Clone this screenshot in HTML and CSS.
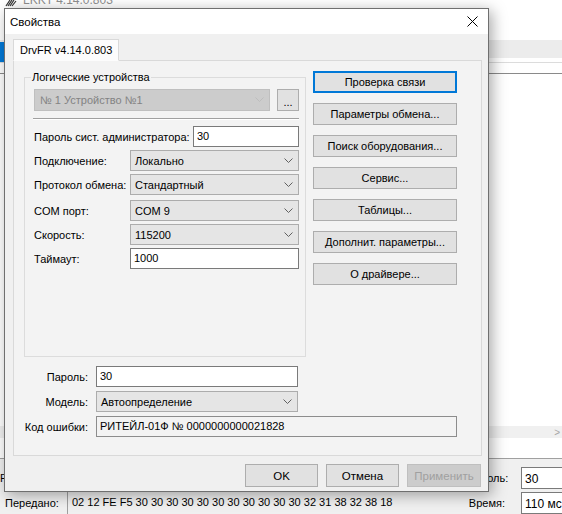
FILE: index.html
```html
<!DOCTYPE html>
<html lang="ru">
<head>
  <meta charset="UTF-8" />
  <title>Свойства</title>
  <link rel="stylesheet" href="styles.css">
</head>
<body>
  <!-- окно программы на заднем плане -->
  <div class="app">
    <div class="app-title">
      <svg class="app-icon" width="12" height="8" viewBox="0 0 12 8">
        <path d="M1 7 L5 1 M3 7 L7 1 M5 7 L9 1 M7 7 L11 2" stroke="#333" stroke-width="1.2" fill="none"/>
      </svg>
      <span>LKKT 4.14.0.803</span>
    </div>
    <div class="app-menu"></div>
    <div class="app-toolbar"></div>
    <div class="app-rule"></div>
    <div class="app-list"></div>
    <div class="app-scroll"><span class="scroll-arrow">&gt;</span></div>
    <div class="app-gap"></div>
    <div class="app-status">
      <div class="status-row">
        <span class="status-left">F</span>
        <span class="status-label">Пароль:</span>
        <span class="status-field">30</span>
      </div>
      <div class="status-row">
        <span class="sent-label">Передано:</span>
        <span class="sent-data">02 12 FE F5 30 30 30 30 30 30 30 30 30 30 30 32 31 38 32 38 18</span>
        <span class="status-label">Время:</span>
        <span class="status-field">110 мс</span>
      </div>
    </div>
    <div class="app-selected"></div>
  </div>

  <!-- диалог свойств -->
  <div class="dialog">
    <div class="dialog-title">
      <span>Свойства</span>
      <svg class="close" width="11" height="11" viewBox="0 0 11 11">
        <path d="M0.5 0.5 L10.5 10.5 M10.5 0.5 L0.5 10.5" stroke="#000" stroke-width="1" fill="none"/>
      </svg>
    </div>

    <div class="dialog-body">
      <div class="tabs">
        <div class="tab">DrvFR v4.14.0.803</div>
      </div>

      <div class="panel">
        <div class="panel-top">
          <div class="group">
            <span class="group-title">Логические устройства</span>
            <div class="device-row">
              <div class="combo combo-disabled device-combo">
                <span>№ 1 Устройство №1</span>
                <svg class="chevron" width="9" height="5" viewBox="0 0 9 5"><polyline points="0.5,0.5 4.5,4.5 8.5,0.5" fill="none" stroke="#bdbdbd"/></svg>
              </div>
              <div class="btn dots-btn">...</div>
            </div>
            <div class="separator"></div>

            <div class="field-row">
              <span>Пароль сист. администратора:</span>
              <div class="edit admin-pass">30</div>
            </div>
            <div class="field-row">
              <span class="field-label">Подключение:</span>
              <div class="combo wide">
                <span>Локально</span>
                <svg class="chevron" width="9" height="5" viewBox="0 0 9 5"><polyline points="0.5,0.5 4.5,4.5 8.5,0.5" fill="none" stroke="#606060"/></svg>
              </div>
            </div>
            <div class="field-row">
              <span class="field-label">Протокол обмена:</span>
              <div class="combo wide">
                <span>Стандартный</span>
                <svg class="chevron" width="9" height="5" viewBox="0 0 9 5"><polyline points="0.5,0.5 4.5,4.5 8.5,0.5" fill="none" stroke="#606060"/></svg>
              </div>
            </div>
            <div class="field-row spaced">
              <span class="field-label">COM порт:</span>
              <div class="combo wide">
                <span>COM 9</span>
                <svg class="chevron" width="9" height="5" viewBox="0 0 9 5"><polyline points="0.5,0.5 4.5,4.5 8.5,0.5" fill="none" stroke="#606060"/></svg>
              </div>
            </div>
            <div class="field-row">
              <span class="field-label">Скорость:</span>
              <div class="combo wide">
                <span>115200</span>
                <svg class="chevron" width="9" height="5" viewBox="0 0 9 5"><polyline points="0.5,0.5 4.5,4.5 8.5,0.5" fill="none" stroke="#606060"/></svg>
              </div>
            </div>
            <div class="field-row">
              <span class="field-label">Таймаут:</span>
              <div class="edit wide">1000</div>
            </div>
          </div>

          <div class="actions">
            <div class="btn btn-default">Проверка связи</div>
            <div class="btn">Параметры обмена...</div>
            <div class="btn">Поиск оборудования...</div>
            <div class="btn">Сервис...</div>
            <div class="btn">Таблицы...</div>
            <div class="btn">Дополнит. параметры...</div>
            <div class="btn">О драйвере...</div>
          </div>
        </div>

        <div class="panel-bottom">
          <div class="bottom-row">
            <span class="bottom-label">Пароль:</span>
            <div class="edit short">30</div>
          </div>
          <div class="bottom-row">
            <span class="bottom-label">Модель:</span>
            <div class="combo short">
              <span>Автоопределение</span>
              <svg class="chevron" width="9" height="5" viewBox="0 0 9 5"><polyline points="0.5,0.5 4.5,4.5 8.5,0.5" fill="none" stroke="#606060"/></svg>
            </div>
          </div>
          <div class="bottom-row">
            <span class="bottom-label">Код ошибки:</span>
            <div class="readonly">РИТЕЙЛ-01Ф № 0000000000021828</div>
          </div>
        </div>
      </div>

      <div class="dialog-buttons">
        <div class="btn footer-btn">OK</div>
        <div class="btn footer-btn">Отмена</div>
        <div class="btn footer-btn btn-disabled">Применить</div>
      </div>
    </div>
  </div>
</body>
</html>
```

FILE: styles.css
```css
* {
  box-sizing: border-box;
  margin: 0;
  padding: 0;
}

body {
  width: 562px;
  height: 514px;
  overflow: hidden;
  position: relative;
  background: #fff;
  color: #000;
  font-family: "Liberation Sans", Arial, sans-serif;
  font-size: 11px;
}

/* ---- окно на заднем плане ---- */
.app {
  position: absolute;
  left: 0;
  top: 0;
  width: 562px;
  height: 514px;
  display: flex;
  flex-direction: column;
}

.app-title {
  height: 8px;
  overflow: hidden;
  display: flex;
  align-items: flex-start;
  gap: 6px;
  padding-left: 5px;
  color: #8f8f8f;
  font-size: 12px;
}

.app-icon {
  flex-shrink: 0;
  margin-top: -1px;
}

.app-title span {
  line-height: 14px;
  margin-top: -7px;
}

.app-menu {
  height: 32px;
}

.app-toolbar {
  height: 18px;
  background: #ececec;
}

.app-rule {
  height: 12px;
  margin-top: 4px;
  border-top: 1px solid #dcdcdc;
  border-bottom: 1px solid #8a8a8a;
}

.app-list {
  height: 353px;
}

.app-scroll {
  height: 12px;
  background: #f0f0f0;
  display: flex;
  justify-content: flex-end;
  align-items: center;
  padding-right: 2px;
}

.scroll-arrow {
  color: #a6a6a6;
  font-size: 10px;
}

.app-gap {
  height: 21px;
  border-bottom: 1px solid #a0a0a0;
}

.app-status {
  flex: 1;
  background: #f0f0f0;
  padding-top: 8px;
  display: flex;
  flex-direction: column;
  gap: 3px;
}

.status-row {
  display: flex;
  align-items: center;
  height: 22px;
}

.status-left {
  flex-shrink: 0;
  width: 467px;
}

.status-label {
  flex-shrink: 0;
  width: 38px;
  text-align: right;
  white-space: nowrap;
}

.status-field {
  flex-shrink: 0;
  margin-left: 16px;
  width: 60px;
  height: 22px;
  background: #fff;
  border: 1px solid #7a7a7a;
  padding: 4px 0 0 3px;
  font-size: 12px;
  white-space: nowrap;
}

.sent-label {
  flex-shrink: 0;
  width: 67px;
  padding-left: 5px;
}

.sent-data {
  flex-shrink: 0;
  width: 400px;
  height: 22px;
  overflow: hidden;
  border-left: 1px solid #a0a0a0;
  padding: 4px 0 0 4px;
  white-space: nowrap;
}

.app-selected {
  position: absolute;
  left: 0;
  top: 42px;
  width: 4px;
  height: 20px;
  background: #0078d7;
}

/* ---- диалог ---- */
.dialog {
  position: absolute;
  left: 4px;
  top: 8px;
  width: 485px;
  height: 484px;
  background: #f0f0f0;
  border: 1px solid #6f6f6f;
  box-shadow: 3px 3px 14px rgba(0, 0, 0, 0.35);
  display: flex;
  flex-direction: column;
}

.dialog-title {
  height: 25px;
  background: #fff;
  display: flex;
  align-items: center;
  justify-content: space-between;
  padding: 0 10px 0 5px;
  font-size: 11.5px;
}

.dialog-body {
  padding: 5px 6px 0 8px;
}

.tabs {
  display: flex;
  position: relative;
  z-index: 1;
  margin-bottom: -1px;
}

.tab {
  width: 106px;
  height: 22px;
  background: #fcfcfc;
  border: 1px solid #d9d9d9;
  border-bottom-color: #fcfcfc;
  padding: 4px 0 0 6px;
  white-space: nowrap;
}

.panel {
  height: 396px;
  background: #f3f3f3;
  border: 1px solid #d9d9d9;
  padding: 10px 0 0 10px;
}

.panel-top {
  display: flex;
  align-items: flex-start;
  gap: 7px;
}

.group {
  position: relative;
  width: 282px;
  height: 280px;
  margin-top: 6px;
  border: 1px solid #dcdcdc;
  padding: 11px 6px 0 9px;
}

.group-title {
  position: absolute;
  left: 6px;
  top: -7px;
  line-height: 13px;
  padding: 0 1px;
  background: #f3f3f3;
}

.device-row {
  display: flex;
  gap: 7px;
}

.combo {
  position: relative;
  height: 21px;
  background: #e5e5e5;
  border: 1px solid #acacac;
  display: flex;
  align-items: center;
  padding-left: 4px;
  white-space: nowrap;
}

.chevron {
  position: absolute;
  right: 5px;
  top: 7px;
}

.combo-disabled {
  background: #cccccc;
  border-color: #bfbfbf;
  color: #838383;
}

.device-combo {
  width: 236px;
  height: 22px;
  padding-left: 5px;
}

.dots-btn {
  width: 22px;
  height: 22px;
  padding-top: 3px;
}

.separator {
  width: 266px;
  margin: 7px 0 0 -1px;
  border-top: 1px solid #a0a0a0;
  border-bottom: 1px solid #fff;
}

.field-row {
  display: flex;
  align-items: center;
  height: 21px;
  margin-top: 3px;
}

.group .separator + .field-row {
  margin-top: 6px;
}

.field-row.spaced {
  margin-top: 5px;
}

.field-label {
  width: 96px;
  white-space: nowrap;
}

.edit {
  height: 21px;
  background: #fff;
  border: 1px solid #7a7a7a;
  padding: 3px 0 0 3px;
  white-space: nowrap;
}

.admin-pass {
  width: 106px;
  margin-left: auto;
}

.wide {
  width: 169px;
}

.actions {
  width: 144px;
  display: flex;
  flex-direction: column;
  gap: 10px;
}

.btn {
  height: 22px;
  background: #e1e1e1;
  border: 1px solid #adadad;
  display: flex;
  align-items: center;
  justify-content: center;
  white-space: nowrap;
}

.btn-default {
  border-color: #0078d7;
  box-shadow: inset 0 0 0 1px #0078d7;
}

.panel-bottom {
  margin-top: 9px;
  display: flex;
  flex-direction: column;
  gap: 4px;
}

.bottom-row {
  display: flex;
  align-items: center;
  gap: 8px;
}

.bottom-label {
  width: 64px;
  text-align: right;
  white-space: nowrap;
}

.short {
  width: 202px;
}

.readonly {
  width: 361px;
  height: 21px;
  border: 1px solid #8c8c8c;
  padding: 3px 0 0 3px;
  white-space: nowrap;
}

.dialog-buttons {
  display: flex;
  justify-content: flex-end;
  gap: 8px;
  margin-top: 8px;
  padding-right: 1px;
}

.footer-btn {
  width: 73px;
  height: 23px;
  font-size: 11.5px;
}

.footer-btn.btn-disabled {
  width: 74px;
  background: #cccccc;
  border-color: #bfbfbf;
  color: #a0a0a0;
}
```
